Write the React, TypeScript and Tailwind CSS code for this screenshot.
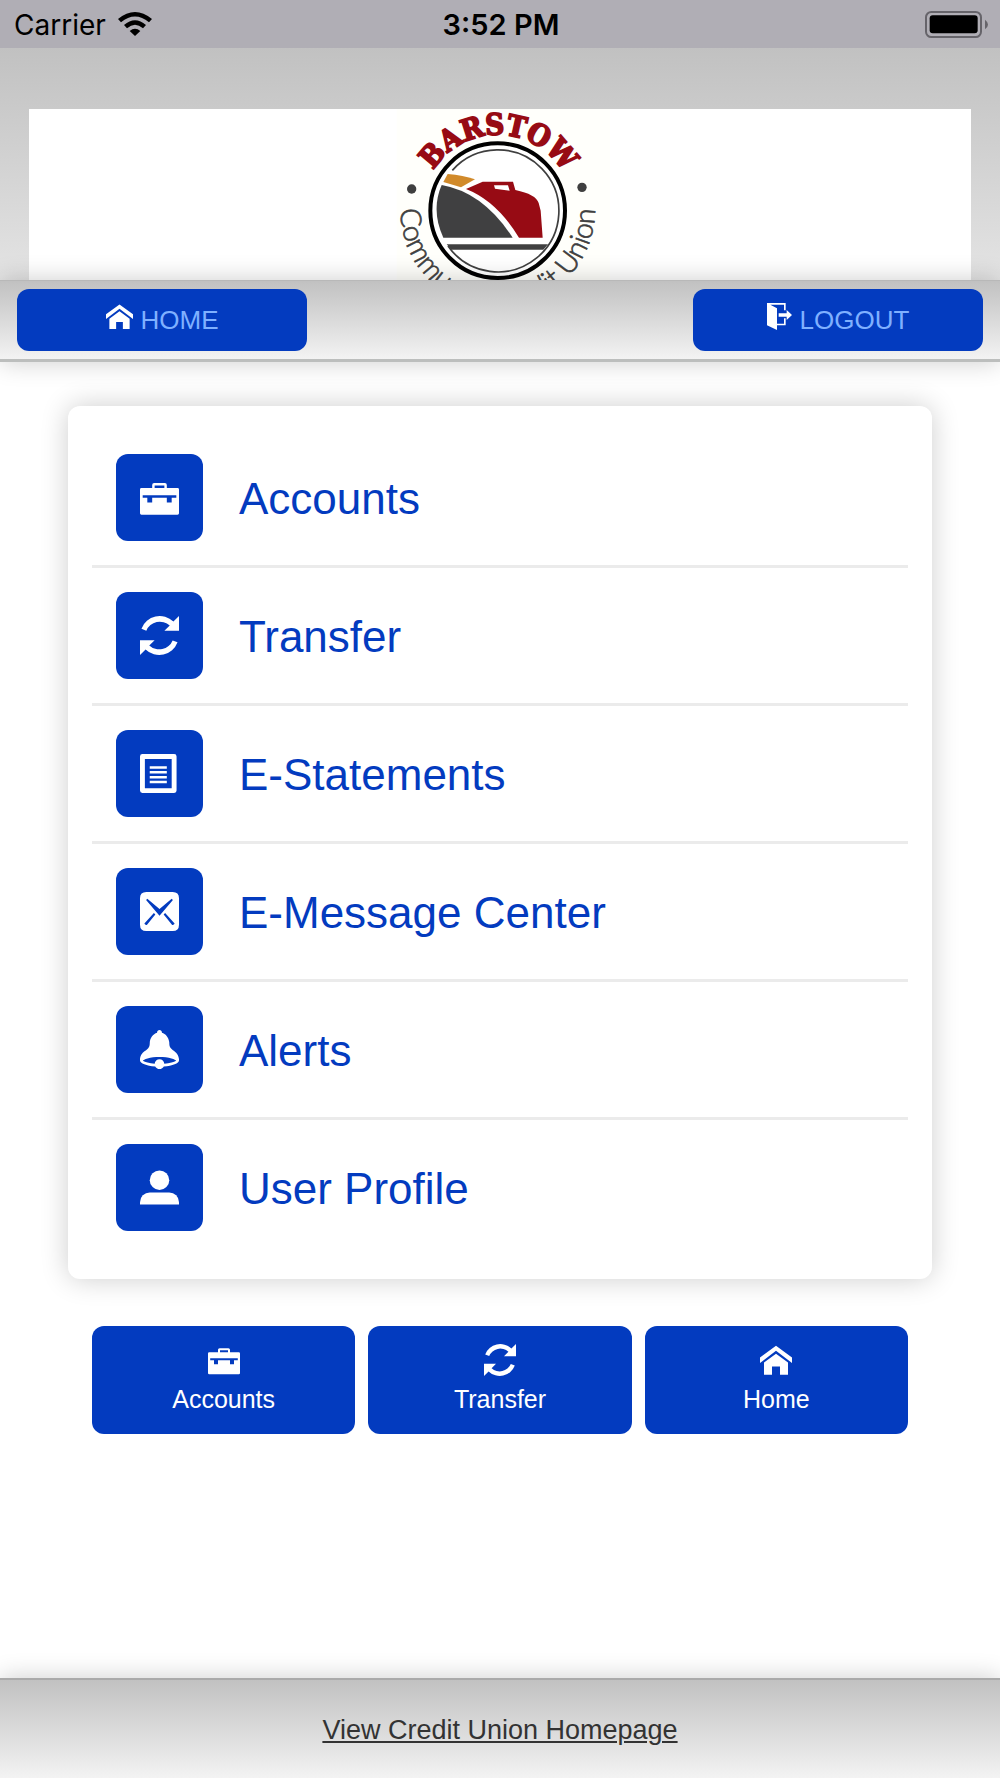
import React from "react";

type IconProps = { className?: string };

function HomeIcon({ className }: IconProps) {
  return (
    <svg viewBox="0 0 16 16" fill="currentColor" className={className} aria-hidden="true">
      <path d="M8 .9 16 6.7V9.5L8 3.4 0 9.5V6.7z" />
      <path d="M8 4.9 14 9.3V15.4H10V11.3H6V15.4H2V9.3z" />
    </svg>
  );
}

function LogoutIcon({ className }: IconProps) {
  return (
    <svg viewBox="0 0 75 81" fill="currentColor" className={className} aria-hidden="true">
      <path d="M0 0H56V22H51V5H10L30 16V62H51V46H56V67H30V81L0 67z" />
      <path d="M35 31H59V21L75 36 59 51V41H35z" />
    </svg>
  );
}

function BriefcaseIcon({ className }: IconProps) {
  return (
    <svg viewBox="0 0 16 16" fill="currentColor" className={className} aria-hidden="true">
      <path
        fillRule="evenodd"
        d="M.6 4.1H5V2.9Q5 2.1 5.8 2.1H10.2Q11 2.1 11 2.9V4.1H15.4Q16 4.1 16 4.7V14.5Q16 15.1 15.4 15.1H.6Q0 15.1 0 14.5V4.7Q0 4.1.6 4.1zM6 3.1V4.1H10V3.1zM1.1 7.1V8.1H3V10.1H5V8.1H11V10.1H13V8.1H14.9V7.1z"
      />
    </svg>
  );
}

function TransferIcon({ className }: IconProps) {
  return (
    <svg viewBox="0 0 16 16" fill="currentColor" className={className} aria-hidden="true">
      <path d="M.6 5.2A8 8 0 0 1 13.7 2.3L16 0V6.1H10L12.2 3.9A6 6 0 0 0 2.6 6z" />
      <path d="M15.4 10.8A8 8 0 0 1 2.3 13.7L0 16V9.9H6L3.8 12.1A6 6 0 0 0 13.4 10z" />
    </svg>
  );
}

function StatementIcon({ className }: IconProps) {
  return (
    <svg viewBox="0 0 16 16" fill="currentColor" className={className} aria-hidden="true">
      <path
        fillRule="evenodd"
        d="M1 0H14Q15 0 15 1V15Q15 16 14 16H1Q0 16 0 15V1Q0 0 1 0zM2 2V14H13V2z"
      />
      <path d="M4 5H11V6H4zM4 7H11V8H4zM4 9H11V10H4zM4 11H11V12H4z" />
    </svg>
  );
}

function MailIcon({ className }: IconProps) {
  return (
    <svg viewBox="0 0 16 16" fill="currentColor" className={className} aria-hidden="true">
      <path
        fillRule="evenodd"
        d="M2.6 0H13.4Q16 0 16 2.6V13.4Q16 16 13.4 16H2.6Q0 16 0 13.4V2.6Q0 0 2.6 0zM2.5 3.3 8 9.7 13.5 3.3 13 2.8 8 7 3 2.8zM5.7 8.6 1.8 12.9Q2 13.6 2.8 13.5L6.3 9.2zM10.3 8.6 9.7 9.2 13.2 13.5Q14 13.6 14.2 12.9z"
      />
    </svg>
  );
}

function BellIcon({ className }: IconProps) {
  return (
    <svg viewBox="0 0 16 16" fill="currentColor" className={className} aria-hidden="true">
      <path d="M16.023 12.5c0-4.5-4-3.5-4-7 0-0.29-0.028-0.538-0.079-0.749-0.263-1.766-1.44-3.183-2.965-3.615 0.014-0.062 0.021-0.125 0.021-0.191 0-0.52-0.45-0.945-1-0.945s-1 0.425-1 0.945c0 0.065 0.007 0.129 0.021 0.191-1.71 0.484-2.983 2.208-3.020 4.273-0.001 0.030-0.001 0.060-0.001 0.091 0 3.5-4 2.5-4 7 0 1.191 2.665 2.187 6.234 2.439 0.336 0.631 1.001 1.061 1.766 1.061s1.43-0.43 1.766-1.061c3.568-0.251 6.234-1.248 6.234-2.439 0-0.004-0-0.007-0-0.011l0.024 0.011zM12.91 13.345c-0.847 0.226-1.846 0.389-2.918 0.479-0.089-1.022-0.947-1.824-1.992-1.824s-1.903 0.802-1.992 1.824c-1.072-0.090-2.071-0.253-2.918-0.479-1.166-0.311-1.724-0.659-1.954-0.845 0.230-0.186 0.788-0.534 1.954-0.845 1.356-0.362 3.1-0.561 4.91-0.561s3.554 0.199 4.91 0.561c1.166 0.311 1.724 0.659 1.954 0.845-0.230 0.186-0.788 0.534-1.954 0.845z" />
    </svg>
  );
}

function UserIcon({ className }: IconProps) {
  return (
    <svg viewBox="0 0 16 16" fill="currentColor" className={className} aria-hidden="true">
      <circle cx="8" cy="5" r="4" />
      <path d="M4 10H12A4 4 0 0 1 16 14V15H0V14A4 4 0 0 1 4 10z" />
    </svg>
  );
}

function WifiIcon() {
  return (
    <svg viewBox="0 0 102 72" className="h-[24px] w-[34px]" aria-hidden="true">
      <path d="M0 21Q51-21 102 21L93 31Q51-4 9 31z" />
      <path d="M18 39Q51 10 84 39L75 49Q51 28 27 49z" />
      <path d="M35 57Q51 44 67 57L51 72z" />
    </svg>
  );
}

function BatteryIcon() {
  return (
    <svg viewBox="0 0 189 81" className="h-[27px] w-[63px]" aria-hidden="true">
      <rect x="3" y="3" width="165" height="75" rx="16" fill="none" stroke="#66646a" strokeWidth="6" />
      <rect x="14" y="13" width="144" height="54" rx="9" />
      <path d="M180 26Q189 33 189 40.500T180 55z" fill="#66646a" />
    </svg>
  );
}

function Logo() {
  return (
    <svg
      viewBox="0 0 720 600"
      className="h-[200px] w-[240px] shrink-0"
      role="img"
      aria-label="Barstow Community Credit Union"
    >
      <defs>
        <path id="arc-top" d="M126 304A227 227 0 0 1 580 304" />
        <path id="arc-bottom" d="M61 284V304A292 292 0 0 0 645 304V284" />
      </defs>
      <rect x="50" y="0" width="640" height="600" fill="#fffffb" />
      <text
        fill="#970b14"
        stroke="#970b14"
        strokeWidth="5"
        textAnchor="middle"
        className="font-['DejaVu_Serif_Condensed','DejaVu_Serif',serif] text-[88px] font-bold"
      >
        <textPath href="#arc-top" startOffset="50.5%">BARSTOW</textPath>
      </text>
      <text
        fill="#3f3f3f"
        stroke="#3f3f3f"
        strokeWidth="2"
        textAnchor="middle"
        className="font-[Lato,sans-serif] text-[86px] font-light"
      >
        <textPath href="#arc-bottom" startOffset="50%">Community Credit Union</textPath>
      </text>
      <circle cx="95" cy="240" r="14" fill="#3f3f3f" />
      <circle cx="606" cy="235" r="14" fill="#3f3f3f" />
      <circle cx="353" cy="305" r="202" fill="#fff" stroke="#000" strokeWidth="12" />
      <path d="M217 184A183 183 0 1 1 204 411" fill="none" stroke="#3f3f3f" strokeWidth="5" />
      <path d="M203 195Q250 199 285 211L243 235 190 219z" fill="#d18a2b" />
      <path d="M185 228Q310 250 398 386H190Q152 304 185 228z" fill="#404041" />
      <path
        fillRule="evenodd"
        d="M258 240 308 218H399L406 243Q468 256 476 282L482 305 488 386H417Q350 276 258 240zM342 229 345 239 389 245 384 229z"
        fill="#970b14"
      />
      <path d="M200 406H504L490 422H214z" fill="#404041" />
    </svg>
  );
}

const menu = [
  { label: "Accounts", Icon: BriefcaseIcon },
  { label: "Transfer", Icon: TransferIcon },
  { label: "E-Statements", Icon: StatementIcon },
  { label: "E-Message Center", Icon: MailIcon },
  { label: "Alerts", Icon: BellIcon },
  { label: "User Profile", Icon: UserIcon },
];

const shortcuts = [
  { label: "Accounts", Icon: BriefcaseIcon },
  { label: "Transfer", Icon: TransferIcon },
  { label: "Home", Icon: HomeIcon },
];

export default function App() {
  return (
    <div className="flex min-h-screen flex-col bg-white font-['Liberation_Sans',Arial,sans-serif]">
      <div className="grid h-12 grid-cols-3 items-center bg-[#b0aeb5] pr-3 pl-3.5 font-[Inter,sans-serif] text-black">
        <div className="flex items-center gap-3">
          <span className="pt-0.5 text-[28px] leading-8">Carrier</span>
          <WifiIcon />
        </div>
        <span className="pt-0.5 text-center text-[29px] leading-8 font-semibold">3:52 PM</span>
        <div className="flex justify-end">
          <BatteryIcon />
        </div>
      </div>

      <header className="h-[232px] overflow-hidden bg-linear-to-b from-[#c1c1c1] to-[#e4e4e4] px-[29px] pt-[61px]">
        <div className="flex justify-center bg-white">
          <Logo />
        </div>
      </header>

      <nav className="relative flex justify-between border-t border-b-3 border-t-[#b8b8b8] border-b-[#bcbebd] bg-linear-to-b from-[#c1c1c1] to-[#f3f3f3] px-[17px] py-2 shadow-[0_0_24px_rgba(0,0,0,0.2)]">
        <a
          href="#home"
          className="flex h-[62px] w-[290px] items-center justify-center gap-2 rounded-xl bg-[#033bbf] text-[26px] leading-8 text-[#7fb0ff]"
        >
          <HomeIcon className="mb-2 size-[27px] text-white" />
          HOME
        </a>
        <a
          href="#logout"
          className="flex h-[62px] w-[290px] items-center justify-center gap-2 rounded-xl bg-[#033bbf] text-[26px] leading-8 text-[#7fb0ff]"
        >
          <LogoutIcon className="mb-2 h-[27px] w-[25px] text-white" />
          LOGOUT
        </a>
      </nav>

      <main className="flex-1 px-[68px] pt-11 pb-11">
        <ul className="rounded-xl bg-white p-6 shadow-[0_0_28px_rgba(0,0,0,0.2)]">
          {menu.map(({ label, Icon }) => (
            <li key={label} className="border-b-3 border-[#ebebeb] last:border-b-0">
              <a href={"#" + label} className="flex items-center gap-9 p-6 text-[44px] leading-[52px] text-[#033bbf]">
                <span className="flex size-[87px] items-center justify-center rounded-xl bg-[#033bbf] text-white">
                  <Icon className="size-[39px]" />
                </span>
                <span className="pt-0.5">{label}</span>
              </a>
            </li>
          ))}
        </ul>

        <div className="mt-[47px] grid grid-cols-3 gap-[13px] px-6">
          {shortcuts.map(({ label, Icon }) => (
            <a
              key={label}
              href={"#" + label}
              className="flex h-[108px] flex-col items-center gap-[7px] rounded-xl bg-[#033bbf] pt-[18px] text-[25px] leading-8 text-white"
            >
              <Icon className="size-8" />
              {label}
            </a>
          ))}
        </div>
      </main>

      <footer className="flex h-[100px] items-center justify-center border-t-2 border-[#aaaaaa] bg-linear-to-b from-[#c1c1c1] to-[#f3f3f3] pt-0.5 shadow-[0_0_24px_rgba(0,0,0,0.2)]">
        <a href="#homepage" className="text-[27px] leading-8 text-[#333333] underline decoration-2 underline-offset-2">
          View Credit Union Homepage
        </a>
      </footer>
    </div>
  );
}
